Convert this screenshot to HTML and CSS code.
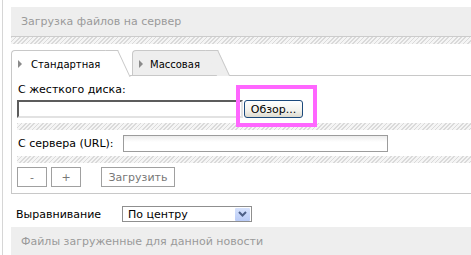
FILE: index.html
```html
<!DOCTYPE html>
<html lang="ru">
<head>
  <meta charset="UTF-8" />
  <title>Загрузка файлов</title>
  <link rel="stylesheet" href="styles.css">
</head>
<body>
  <div class="page">
    <div class="block-head">Загрузка файлов на сервер</div>
    <div class="hatch"></div>

    <div class="tabs">
      <div class="tab active"><span class="tri"></span>Стандартная</div>
      <div class="tab"><span class="tri"></span>Массовая</div>
    </div>

    <div class="panel">
      <div class="label">С жесткого диска:</div>
      <div class="file-row">
        <input class="file-field" type="text">
        <button class="browse">Обзор...</button>
        <span class="mark"></span>
      </div>
      <div class="hatch"></div>
      <div class="url-row">
        <span class="url-label">С сервера (URL):</span>
        <input class="url-field" type="text">
      </div>
      <div class="hatch"></div>
      <div class="actions">
        <button class="btn sq">-</button>
        <button class="btn sq">+</button>
        <button class="btn upload">Загрузить</button>
      </div>
    </div>

    <div class="align-row">
      <span class="align-label">Выравнивание</span>
      <div class="select">
        <span class="select-text">По центру</span>
        <span class="arrow">
          <svg width="9" height="6" viewBox="0 0 9 6"><path d="M1 1 L4.5 4.5 L8 1" fill="none" stroke="#4d5f86" stroke-width="2"/></svg>
        </span>
      </div>
    </div>

    <div class="block-head bottom">Файлы загруженные для данной новости</div>
  </div>
</body>
</html>
```

FILE: styles.css
```css
* { box-sizing: border-box; }

html, body { overflow: hidden; }

body {
  margin: 0;
  font-family: 'DejaVu Sans', sans-serif;
  font-size: 11px;
  color: #000;
  background: #fff;
}

.page {
  width: 620px;
  min-height: 100vh;
  margin-left: 2px;
  border-left: 1px solid #d6d6d6;
  padding: 7px 0 0 8px;
}

.block-head {
  height: 30px;
  line-height: 29px;
  padding-left: 10px;
  background: #eeeeee;
  border-bottom: 1px solid #cccccc;
  color: #9a9a9a;
}

.block-head.bottom {
  margin-top: 5px;
  border-bottom: none;
}

.hatch {
  height: 7px;
  background: repeating-linear-gradient(135deg, #dadada 0 1.2px, #f5f5f5 1.2px 3px);
}

/* tabs */
.tabs {
  display: flex;
  align-items: flex-start;
  height: 26px;
  margin-top: 6px;
  border-bottom: 1px solid #c8c8c8;
}

.tab {
  position: relative;
  height: 25px;
  display: flex;
  align-items: center;
  padding: 2px 0 0 6px;
  margin-right: 14px;
  font-size: 10px;
  background: #eeeeee;
  border-top: 1px solid #c8c8c8;
  border-left: 1px solid #c8c8c8;
  border-top-left-radius: 4px;
}

.tab:first-child { width: 107px; }
.tab:nth-child(2) { width: 86px; }

.tab.active {
  height: 26px;
  background: #fff;
  padding-bottom: 1px;
}

.tab::after {
  content: "";
  position: absolute;
  top: -1px;
  right: 0;
  width: 12px;
  height: calc(100% + 1px);
  background: inherit;
  border-top: 1px solid #c8c8c8;
  border-right: 1px solid #c8c8c8;
  transform: skewX(25deg);
  transform-origin: top right;
}

.tri {
  width: 0;
  height: 0;
  border-left: 4px solid #8a8a8a;
  border-top: 4px solid transparent;
  border-bottom: 4px solid transparent;
  margin-right: 9px;
}

.tab:nth-child(2) .tri { margin-right: 7px; }

/* panel */
.panel {
  border-left: 1px solid #c8c8c8;
  border-bottom: 1px solid #c8c8c8;
  padding: 6px 0 6px 5px;
}

.label {
  line-height: 15px;
  padding-left: 1px;
}

.file-row {
  position: relative;
  display: flex;
  margin-top: 3px;
}

.file-field {
  width: 226px;
  height: 18px;
  margin: 0;
  border: 2px solid;
  border-color: #5c5c5c #e2e2e2 #e2e2e2 #5c5c5c;
  background: #fff;
}

.browse {
  width: 59px;
  height: 18px;
  margin: 0 0 0 1px;
  padding: 0;
  font: inherit;
  color: #000;
  border: 1px solid #1c4a7c;
  border-radius: 3px;
  background: linear-gradient(#ffffff, #f3f2ec 60%, #dedbcf);
}

.mark {
  position: absolute;
  left: 219px;
  top: -15px;
  width: 81px;
  height: 42px;
  border: 4px solid #ff66ff;
}

.file-row + .hatch { margin-top: 5px; }

.url-row {
  display: flex;
  align-items: center;
  margin-top: 5px;
}

.url-label {
  width: 106px;
  padding-left: 1px;
}

.url-field {
  width: 265px;
  height: 17px;
  margin: 0;
  border: 1px solid #9c9c9c;
  background: linear-gradient(#ececec, #fff 6px);
}

.url-row + .hatch { margin-top: 4px; }

.actions {
  display: flex;
  gap: 4px;
  margin-top: 4px;
}

.btn {
  height: 20px;
  margin: 0;
  padding: 0;
  font: inherit;
  color: #777;
  background: #fff;
  border: 1px solid #a0a0a0;
}

.btn.sq { width: 30px; }

.btn.upload {
  width: 74px;
  margin-left: 16px;
}

/* alignment */
.align-row {
  display: flex;
  align-items: center;
  margin-top: 12px;
  padding-left: 5px;
}

.align-label { width: 106px; }

.select {
  display: flex;
  align-items: center;
  width: 130px;
  height: 16px;
  padding: 0 1px 0 5px;
  border: 1px solid #8f8f8f;
}

.select-text { flex: 1; }

.arrow {
  display: flex;
  align-items: center;
  justify-content: center;
  width: 15px;
  height: 13px;
  background: linear-gradient(#d6e2fd, #b9cbf6);
  border-radius: 1px;
}
```
